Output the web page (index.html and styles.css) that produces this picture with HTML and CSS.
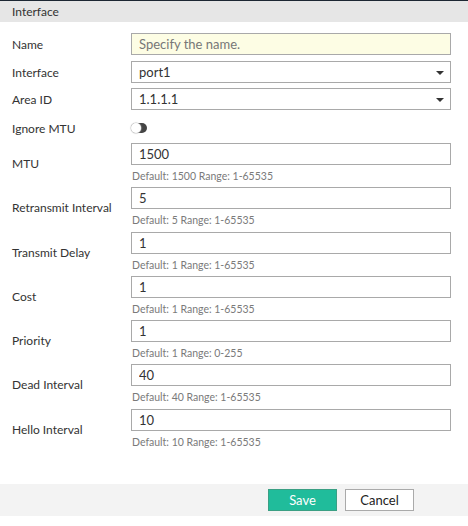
FILE: index.html
```html
<!DOCTYPE html>
<html>
<head>
<meta charset="utf-8">
<link rel="stylesheet" href="styles.css">
</head>
<body>
<div class="page">
  <div class="header">Interface</div>
  <div class="form">
    <div class="row simple">
      <label class="lbl">Name</label>
      <div class="field"><input class="inp name" type="text" placeholder="Specify the name."></div>
    </div>
    <div class="row simple">
      <label class="lbl">Interface</label>
      <div class="field"><div class="inp select"><span>port1</span><span class="caret"></span></div></div>
    </div>
    <div class="row simple">
      <label class="lbl">Area ID</label>
      <div class="field"><div class="inp select"><span>1.1.1.1</span><span class="caret"></span></div></div>
    </div>
    <div class="row toggle-row">
      <label class="lbl">Ignore MTU</label>
      <div class="field"><span class="toggle"><span class="knob"></span></span></div>
    </div>
    <div class="row num">
      <label class="lbl">MTU</label>
      <div class="field"><input class="inp" type="text" value="1500"><div class="help">Default: 1500 Range: 1-65535</div></div>
    </div>
    <div class="row num">
      <label class="lbl">Retransmit Interval</label>
      <div class="field"><input class="inp" type="text" value="5"><div class="help">Default: 5 Range: 1-65535</div></div>
    </div>
    <div class="row num">
      <label class="lbl">Transmit Delay</label>
      <div class="field"><input class="inp" type="text" value="1"><div class="help">Default: 1 Range: 1-65535</div></div>
    </div>
    <div class="row num">
      <label class="lbl">Cost</label>
      <div class="field"><input class="inp" type="text" value="1"><div class="help">Default: 1 Range: 1-65535</div></div>
    </div>
    <div class="row num">
      <label class="lbl">Priority</label>
      <div class="field"><input class="inp" type="text" value="1"><div class="help">Default: 1 Range: 0-255</div></div>
    </div>
    <div class="row num">
      <label class="lbl">Dead Interval</label>
      <div class="field"><input class="inp" type="text" value="40"><div class="help">Default: 40 Range: 1-65535</div></div>
    </div>
    <div class="row num">
      <label class="lbl">Hello Interval</label>
      <div class="field"><input class="inp" type="text" value="10"><div class="help">Default: 10 Range: 1-65535</div></div>
    </div>
  </div>
  <div class="footer">
    <button class="btn save">Save</button>
    <button class="btn cancel">Cancel</button>
  </div>
</div>
</body>
</html>
```
FILE: styles.css
```css
* { box-sizing: border-box; }
html, body { margin: 0; padding: 0; background: #fff; }
body { font-family: Lato, "Liberation Sans", sans-serif; font-size: 12px; color: #333; }
.page { width: 468px; height: 526px; display: flex; flex-direction: column; }
.header {
  border-top: 1px solid #1d2733;
  background: #e6e6e6;
  height: 22px;
  line-height: 21px;
  padding-left: 12px;
  font-size: 12px;
  color: #333;
}
.form { padding-top: 11px; height: 462px; }
.row { display: flex; align-items: center; }
.lbl { width: 131px; padding-left: 12px; color: #333; font-size: 12px; padding-top: 1px; }
.field { width: 320px; }
.simple { height: 22px; margin-bottom: 5.5px; }
.toggle-row { height: 25px; margin-bottom: 2.5px; }
.num { margin-bottom: 4.3px; }
.inp {
  display: block;
  width: 320px;
  height: 22px;
  border: 1px solid #a9a9a9;
  background: #fff;
  font-family: Lato, "Liberation Sans", sans-serif;
  font-size: 13px;
  color: #333;
  padding: 0 7px;
  margin: 0;
  outline: none;
  border-radius: 0;
}
.name { background: #fdfde4; }
.name::placeholder { color: #777; }
.select { display: flex; align-items: center; justify-content: space-between; padding-right: 6px; }
.caret {
  width: 0; height: 0;
  border-left: 4px solid transparent;
  border-right: 4px solid transparent;
  border-top: 4px solid #333;
  margin-top: 2px;
}
.help { font-size: 10.5px; color: #7a7a7a; line-height: 13px; margin-top: 5px; margin-left: 1px; }
.toggle {
  display: block;
  position: relative;
  width: 16px;
  height: 10px;
  background: #444;
  border-radius: 5px;
}
.knob {
  position: absolute;
  left: 0; top: 0;
  width: 10px; height: 10px;
  border-radius: 50%;
  background: #fff;
  box-shadow: 0 0 1px 0.5px #bbb;
}
.footer {
  height: 32px;
  background: #f3f3f3;
  display: flex;
  align-items: center;
  justify-content: flex-end;
  gap: 8px;
  padding-right: 54px;
}
.btn {
  width: 69px;
  height: 22px;
  font-family: Lato, "Liberation Sans", sans-serif;
  font-size: 13px;
  padding: 0;
  border-radius: 0;
}
.save { background: #20bc9b; border: 1px solid #3b9f84; color: #fff; }
.cancel { background: #fff; border: 1px solid #aaa; color: #222; }
```
